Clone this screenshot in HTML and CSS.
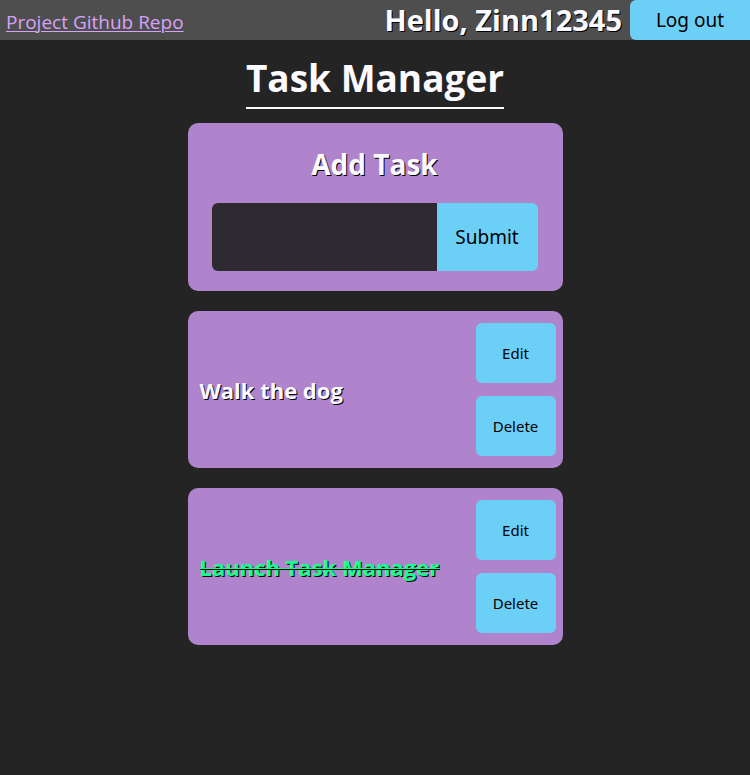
FILE: index.html
```html
<!DOCTYPE html>
<html lang="en">
<head>
<meta charset="utf-8">
<meta name="viewport" content="width=device-width, initial-scale=1">
<title>Task Manager</title>
<link rel="stylesheet" href="styles.css">
</head>
<body>
<header class="navbar">
  <a class="repo-link" href="#">Project Github Repo</a>
  <div class="account">
    <h2 class="greeting">Hello, Zinn12345</h2>
    <button class="btn logout" type="button">Log out</button>
  </div>
</header>
<main class="page">
  <h1 class="title">Task Manager</h1>
  <form class="card add-task">
    <h2 class="form-title"><label for="task">Add Task</label></h2>
    <div class="form-row">
      <input class="task-input" id="task" type="text">
      <button class="btn submit" type="button">Submit</button>
    </div>
  </form>
  <article class="card task">
    <h3 class="task-name">Walk the dog</h3>
    <div class="actions">
      <button class="btn action" type="button">Edit</button>
      <button class="btn action" type="button">Delete</button>
    </div>
  </article>
  <article class="card task">
    <h3 class="task-name done">Launch Task Manager</h3>
    <div class="actions">
      <button class="btn action" type="button">Edit</button>
      <button class="btn action" type="button">Delete</button>
    </div>
  </article>
</main>
</body>
</html>
```
FILE: styles.css
```css
* {
  box-sizing: border-box;
}

body {
  margin: 0;
  min-height: 100vh;
  background: #242424;
  color: #fafaff;
  font-family: "Segoe UI", "Open Sans", sans-serif;
}

h1, h2, h3 {
  margin: 0;
  font-weight: 700;
}

.navbar {
  display: flex;
  justify-content: space-between;
  align-items: center;
  height: 40px;
  padding-left: 6px;
  background: #4e4e4e;
}

.repo-link {
  color: #d7a3f9;
  font-size: 19px;
  line-height: 40px;
  padding-top: 4px;
  text-underline-offset: 2px;
  text-decoration-thickness: 1px;
}

.account {
  display: flex;
  align-items: center;
  gap: 8px;
  height: 100%;
}

.greeting,
.form-title {
  line-height: 42px;
  text-shadow: 1px 1px #000;
}

.greeting {
  font-size: 29px;
}

.form-title {
  font-size: 28px;
}

.btn {
  border: 0;
  border-radius: 6px;
  padding: 0;
  background: #6ccff6;
  color: #000;
  font-family: Tahoma, "Noto Sans", sans-serif;
  font-size: 15px;
}

.logout {
  width: 120px;
  height: 100%;
  border-radius: 6px 0 0 6px;
  font-size: 19px;
}

.page {
  display: flex;
  flex-direction: column;
  align-items: center;
  gap: 20px;
  padding: 10px 0 20px;
}

.title {
  margin-bottom: -6px;
  padding-bottom: 1px;
  border-bottom: 2px solid #fafaff;
  font-size: 37px;
  line-height: 56px;
}

.card {
  width: 50%;
  border-radius: 10px;
  background: #af84cc;
}

.add-task {
  padding: 20px 25px 20px 24px;
  text-align: center;
}

.form-row {
  display: flex;
  height: 68px;
  margin-top: 18px;
}

.task-input {
  flex: 1;
  min-width: 0;
  border: 0;
  border-radius: 6px 0 0 6px;
  padding: 0 12px;
  background: #2d2a32;
  color: #fafaff;
  font: inherit;
  font-size: 20px;
}

.submit {
  width: 101px;
  border-radius: 0 6px 6px 0;
  font-size: 19px;
}

.task {
  display: flex;
  justify-content: space-between;
  align-items: center;
  padding: 12px 7px 12px 12px;
}

.task-name {
  font-size: 22px;
  line-height: 30px;
  text-shadow: 1px 1px #000;
}

.done {
  color: #15ff8d;
  text-decoration: line-through;
  text-decoration-thickness: 1px;
}

.actions {
  display: flex;
  flex-direction: column;
  gap: 13px;
}

.action {
  width: 80px;
  height: 60px;
}
```
